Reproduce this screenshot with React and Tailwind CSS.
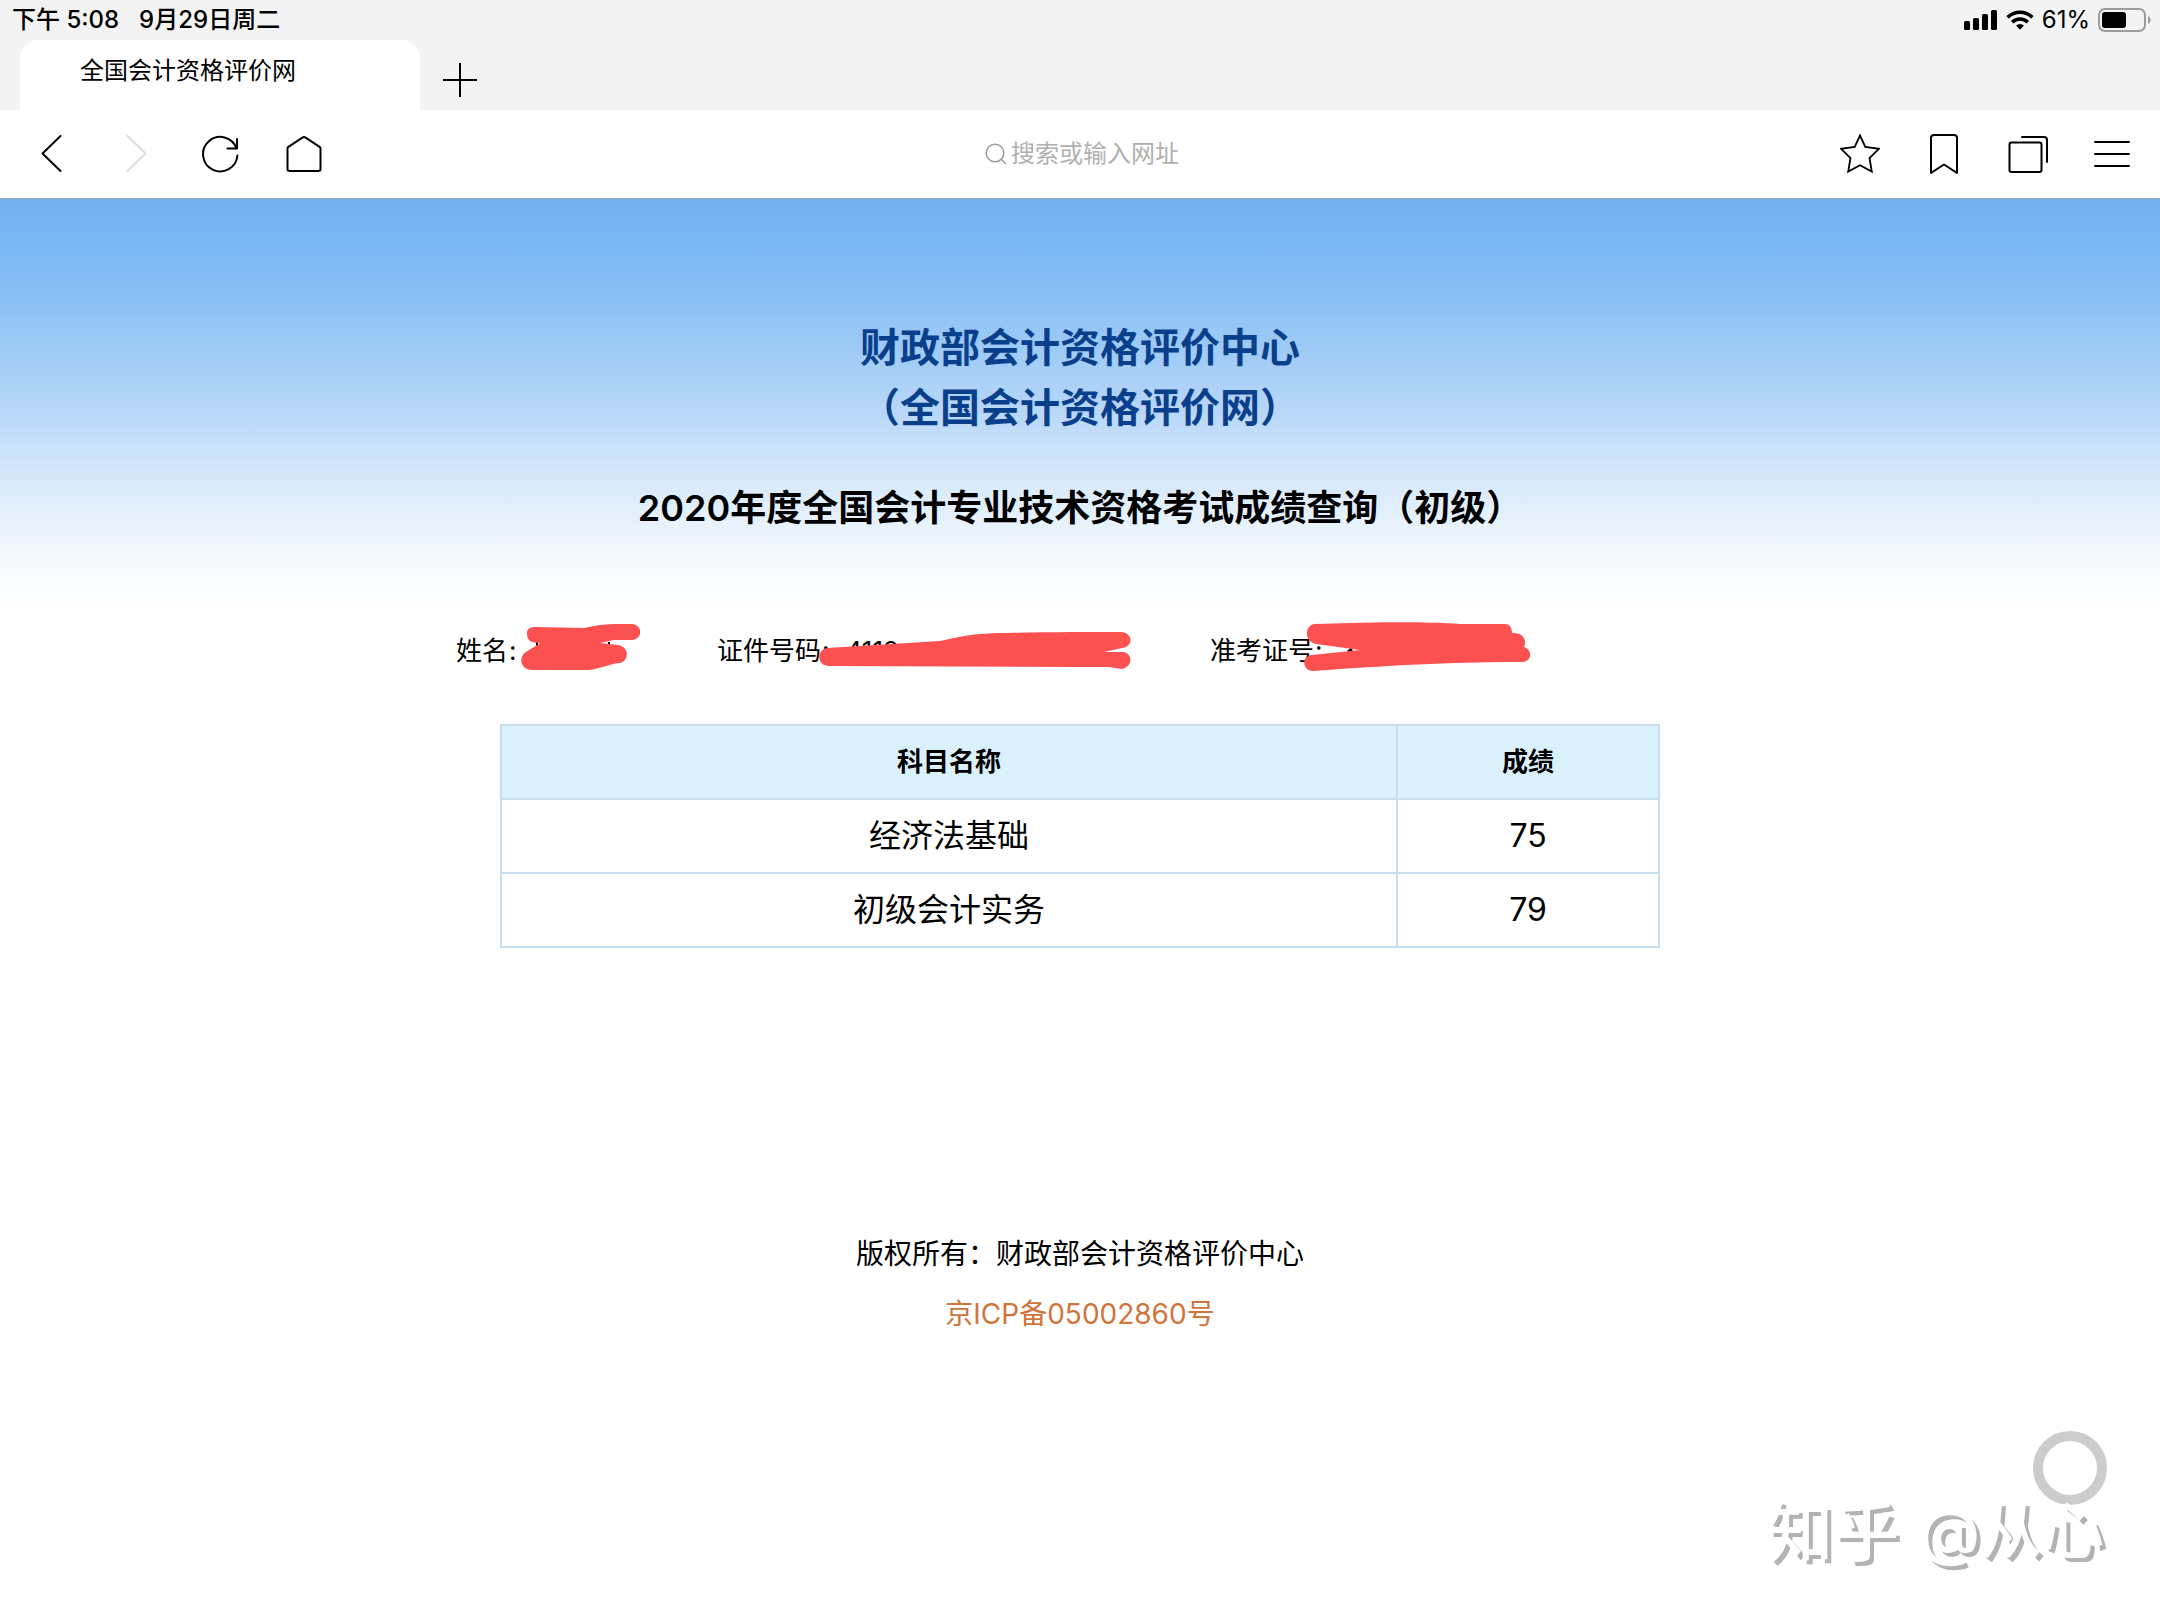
import React from 'react';

const scores = [
  { subject: '经济法基础', score: 75 },
  { subject: '初级会计实务', score: 79 },
];

const Icon = ({ children, className = '' }) => (
  <svg
    viewBox="0 0 40 40"
    className={`block h-10 w-10 ${className}`}
    fill="none"
    stroke="currentColor"
    strokeWidth="2"
    strokeLinecap="round"
    strokeLinejoin="round"
    aria-hidden="true"
  >
    {children}
  </svg>
);

const ToolButton = ({ label, disabled = false, children }) => (
  <button type="button" aria-label={label} disabled={disabled} className="h-10 w-10 text-black disabled:text-[#dddddd]">
    <Icon>{children}</Icon>
  </button>
);

const StatusBar = () => (
  <div className="flex h-10 items-center justify-between pl-3 pr-2 text-2xl font-medium">
    <div className="flex gap-5">
      <span>下午 5:08</span>
      <span>9月29日周二</span>
    </div>
    <div className="flex items-center gap-2">
      <svg viewBox="0 0 34 20" className="h-5 w-[34px]" aria-hidden="true">
        <rect x="0" y="11" width="6" height="9" rx="1.5" />
        <rect x="9" y="8" width="6" height="12" rx="1.5" />
        <rect x="18" y="4" width="6" height="16" rx="1.5" />
        <rect x="27" y="0" width="6" height="20" rx="1.5" />
      </svg>
      <svg viewBox="0 0 28 20" className="h-5 w-7" fill="none" stroke="black" strokeWidth="3.6" aria-hidden="true">
        <path d="M1.6 7.4a17.6 17.6 0 0 1 24.8 0" />
        <path d="M6.2 12.2a11 11 0 0 1 15.6 0" />
        <path d="M14 19.8l-4-4.2a5.8 5.8 0 0 1 8 0z" fill="black" stroke="none" />
      </svg>
      <span className="font-normal">61%</span>
      <svg viewBox="0 0 54 24" className="h-6 w-[54px]" aria-hidden="true">
        <rect x="1" y="1" width="46" height="22" rx="6" fill="none" stroke="#9b9b9b" strokeWidth="2" />
        <rect x="4" y="4" width="24" height="16" rx="3" />
        <path d="M50 8c3.5 1.5 3.5 6.5 0 8z" fill="#9b9b9b" />
      </svg>
    </div>
  </div>
);

const TabStrip = () => (
  <div className="flex h-[70px] pl-5">
    <div className="w-[400px] rounded-t-[18px] bg-white pl-[60px] pt-3 text-2xl leading-[38px]">全国会计资格评价网</div>
    <button type="button" aria-label="新建标签页" className="ml-5 mt-5 h-10 w-10">
      <Icon>
        <path d="M20 3v34M3 20h34" strokeLinecap="butt" />
      </Icon>
    </button>
  </div>
);

const Toolbar = () => (
  <div className="flex h-[88px] items-center bg-white pl-8 pr-7">
    <div className="flex gap-11">
      <ToolButton label="后退">
        <path d="M28.5 2L10.5 19.5L28.5 37" />
      </ToolButton>
      <ToolButton label="前进" disabled>
        <path d="M11.5 2L29.5 19.5L11.5 37" />
      </ToolButton>
      <ToolButton label="刷新">
        <path d="M37.4 21.5A17.2 17.2 0 1 1 36.5 14.5M37 5v9.5h-9.5" />
      </ToolButton>
      <ToolButton label="主页">
        <path d="M3.5 14.5q0-1 .9-1.6L18.8 3.3q1.2-.8 2.4 0L35.6 12.9q.9.6.9 1.6V35q0 2-2 2h-29q-2 0-2-2z" />
      </ToolButton>
    </div>
    <label className="flex flex-1 items-center justify-center gap-1 pl-1 text-[#b0b0b0]">
      <svg viewBox="0 0 22 22" className="h-[22px] w-[22px]" fill="none" stroke="#999999" strokeWidth="1.5" aria-hidden="true">
        <circle cx="10" cy="10" r="8.8" />
        <path d="M16 16l5 5" />
      </svg>
      <input
        type="text"
        aria-label="地址栏"
        placeholder="搜索或输入网址"
        className="w-[172px] bg-transparent text-2xl outline-none placeholder:text-[#b0b0b0]"
      />
    </label>
    <div className="flex gap-11">
      <ToolButton label="收藏">
        <path
          d="M20 1.5L25.3 13L39 14.8L29.5 24L31.8 37.5L20 31.3L8.2 37.5L10.5 24L1 14.8L14.7 13Z"
          strokeLinejoin="miter"
          strokeWidth="1.8"
        />
      </ToolButton>
      <ToolButton label="书签">
        <path d="M7 39V4q0-3 3-3h20q3 0 3 3v35l-13-8.5z" />
      </ToolButton>
      <ToolButton label="标签页">
        <rect x="1.5" y="8.5" width="32" height="29.5" rx="2" />
        <path d="M14 3h22q3 0 3 3v22" />
      </ToolButton>
      <ToolButton label="菜单">
        <path d="M3 8h34M3 20h34M3 32h34" />
      </ToolButton>
    </div>
  </div>
);

// Label with a red marker scribble lying over its value
const Field = ({ label, value, children }) => (
  <div className="relative whitespace-nowrap">
    <span>{label}</span>
    <span className="ml-px">:</span>
    {value && <span className="ml-4">{value}</span>}
    <svg viewBox="0 0 420 60" className="absolute left-0 top-0 h-[60px] w-[420px] fill-[#fd5051]" aria-hidden="true">
      {children}
    </svg>
  </div>
);

const CandidateInfo = () => (
  <div className="mx-auto grid w-[1248px] max-w-full grid-cols-[261px_493px_1fr] text-[26px] leading-[60px]">
    <Field label="姓名">
      <path d="M81 21v8M153 21v8" stroke="black" strokeWidth="2" />
      <path d="M71 12C71 8 74 6 79 6L129 7C144 3 154 3 176 3C187 4 187 18 176 19L158 19L144 22L162 24C174 26 173 40 164 42C156 42 144 48 132 49L77 49C64 49 62 36 70 31C76 27 80 25 84 22C74 22 71 19 71 12Z" />
    </Field>
    <Field label="证件号码" value="4112">
      <path d="M380 28l6 3" stroke="black" strokeWidth="2" />
      <path d="M110 27L223 20C250 14 262 12 290 12C330 11 370 11 404 11C417 12 416 26 405 27L387 31L406 31C416 32 416 46 405 48L392 46L362 46L111 45C100 44 99 29 110 27Z" />
    </Field>
    <Field label="准考证号">
      <path d="M138 31l4-3" stroke="black" strokeWidth="3" />
      <path d="M105 3L140 2C180 1 220 1 250 3L295 3C300 3 302 7 302 12C314 11 317 20 314 26C323 29 322 41 312 41C250 41 200 43 103 50C92 50 91 35 102 34L150 29L106 23C94 21 94 4 105 3Z" />
    </Field>
  </div>
);

const ScoreTable = () => (
  <table className="mx-auto mt-[43px] w-[1160px] max-w-full border-collapse text-center">
    <thead>
      <tr className="h-[74px] bg-[#daf0fb] text-[26px] leading-9">
        <th className="border-2 border-[#c5e0ec] font-bold">科目名称</th>
        <th className="w-[262px] border-2 border-[#c5e0ec] font-bold">成绩</th>
      </tr>
    </thead>
    <tbody>
      {scores.map(({ subject, score }) => (
        <tr key={subject} className="h-[74px] text-[32px] leading-10">
          <td className="border-2 border-[#c5e0ec]">{subject}</td>
          <td className="border-2 border-[#c5e0ec]">{score}</td>
        </tr>
      ))}
    </tbody>
  </table>
);

export default function App() {
  return (
    <div className="relative flex min-h-screen flex-col overflow-hidden bg-white font-['Inter','Noto_Sans_CJK_SC',sans-serif] text-black">
      <header className="bg-[#f3f3f3]">
        <StatusBar />
        <TabStrip />
        <Toolbar />
      </header>

      <main className="flex-1 border-t-2 border-[#84aed6] bg-[linear-gradient(to_bottom,#72b1f2_0px,#7ab7f2_45px,#8ac0f4_100px,#9ecbf6_150px,#b3d4f8_200px,#cfe4fa_260px,#e6f1fc_320px,#f7fbfe_370px,#ffffff_415px)] pt-[118px] text-center">
        <h1 className="text-[40px] font-bold leading-[60px] text-[#0a3f8c]">
          财政部会计资格评价中心
          <br />
          （全国会计资格评价网）
        </h1>
        <h2 className="mt-10 text-4xl font-semibold leading-[60px]">2020年度全国会计专业技术资格考试成绩查询（初级）</h2>
        <div className="mt-[83px] text-left">
          <CandidateInfo />
        </div>
        <ScoreTable />
        <footer className="mt-[276px] text-[28px] leading-[60px]">
          <p>版权所有：财政部会计资格评价中心</p>
          <a href="#icp" className="text-[#d0743c]">
            京ICP备05002860号
          </a>
        </footer>
      </main>

      <button
        type="button"
        aria-label="悬浮按钮"
        className="absolute bottom-[115px] right-[53px] h-[74px] w-[74px] rounded-full border-[10px] border-[#cccccc]"
      />
      <div className="absolute bottom-[43px] right-[56px] flex items-center gap-5 text-[62px] font-medium leading-[90px] text-white [text-shadow:4px_4px_0_#b3b3b3]">
        <span className="text-[66px]">知乎</span>
        <span>@从心</span>
      </div>
    </div>
  );
}
